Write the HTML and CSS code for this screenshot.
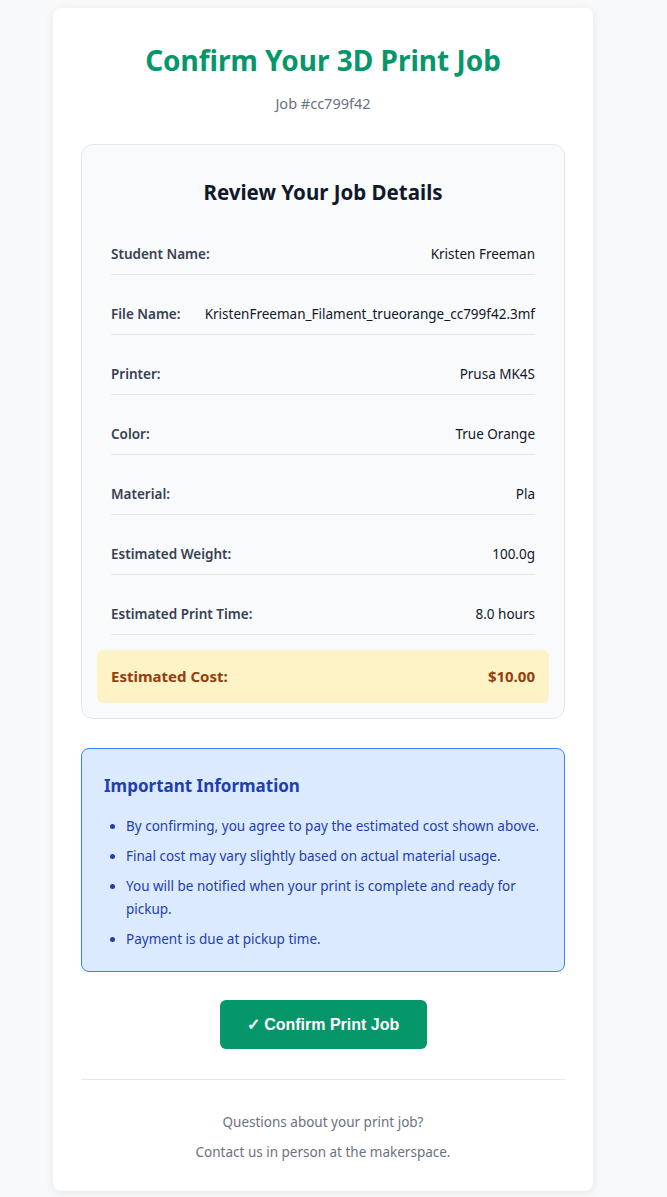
FILE: index.html
```html
<!DOCTYPE html>
<html lang="en">
<head>
<meta charset="utf-8">
<title>Confirm Your 3D Print Job</title>
<link rel="stylesheet" href="styles.css">
</head>
<body>
<div class="page">
  <main class="container">
    <header class="header">
      <h1 class="title">Confirm Your 3D Print Job</h1>
      <p class="job-id">Job #cc799f42</p>
    </header>

    <section class="details">
      <h2 class="details-title">Review Your Job Details</h2>
      <div class="row"><span class="label">Student Name:</span><span class="value">Kristen Freeman</span></div>
      <div class="row"><span class="label">File Name:</span><span class="value">KristenFreeman_Filament_trueorange_cc799f42.3mf</span></div>
      <div class="row"><span class="label">Printer:</span><span class="value">Prusa MK4S</span></div>
      <div class="row"><span class="label">Color:</span><span class="value">True Orange</span></div>
      <div class="row"><span class="label">Material:</span><span class="value">Pla</span></div>
      <div class="row"><span class="label">Estimated Weight:</span><span class="value">100.0g</span></div>
      <div class="row"><span class="label">Estimated Print Time:</span><span class="value">8.0 hours</span></div>
      <div class="row cost"><span class="label">Estimated Cost:</span><span class="value">$10.00</span></div>
    </section>

    <section class="info">
      <h3 class="info-title">Important Information</h3>
      <ul class="info-list">
        <li>By confirming, you agree to pay the estimated cost shown above.</li>
        <li>Final cost may vary slightly based on actual material usage.</li>
        <li>You will be notified when your print is complete and ready for pickup.</li>
        <li>Payment is due at pickup time.</li>
      </ul>
    </section>

    <div class="actions">
      <button class="confirm-btn" type="button">✓ Confirm Print Job</button>
    </div>

    <footer class="footer">
      <p>Questions about your print job?</p>
      <p>Contact us in person at the makerspace.</p>
    </footer>
  </main>
</div>
</body>
</html>
```

FILE: styles.css
```css
* { box-sizing: border-box; }

html, body {
  margin: 0;
  padding: 0;
  background: #f8f9fa;
}

body {
  font-family: "Noto Sans", "Open Sans", sans-serif;
  color: #1f2937;
}

.page {
  padding: 8px 0 7px 53px;
}

.container {
  width: 540px;
  background: #ffffff;
  border-radius: 8px;
  box-shadow: 0 2px 10px rgba(0, 0, 0, 0.08);
  padding: 31px 28px 29px;
}

.header {
  text-align: center;
  margin-bottom: 31px;
}

.title {
  margin: 0;
  font-size: 28px;
  line-height: 42px;
  font-weight: 700;
  color: #059669;
}

.job-id {
  margin: 12px 0 0;
  font-size: 14.5px;
  line-height: 20px;
  color: #6b7280;
}

.details {
  background: #f8fafc;
  border: 1px solid #e5e7eb;
  border-radius: 12px;
  padding: 33px 15px 15px;
}

.details-title {
  margin: 0 0 27px;
  text-align: center;
  font-size: 20.5px;
  line-height: 28px;
  font-weight: 700;
  color: #111827;
}

.row {
  display: flex;
  justify-content: space-between;
  align-items: center;
  gap: 16px;
  margin: 0 14px 18px;
  padding: 11px 0 10px;
  border-bottom: 1px solid #e5e7eb;
  font-size: 13.5px;
  line-height: 20px;
}

.label {
  font-weight: 600;
  color: #374151;
  white-space: nowrap;
}

.value {
  color: #111827;
  text-align: right;
  white-space: nowrap;
}

.row.cost {
  margin: 0;
  margin-top: -3px;
  padding: 16px 14px 17px;
  background: #fef3c7;
  border-bottom: none;
  border-radius: 6px;
  font-size: 15px;
}

.row.cost .label,
.row.cost .value {
  font-weight: 700;
  color: #92400e;
}

.info {
  margin-top: 29px;
  background: #dbeafe;
  border: 1px solid #3b82f6;
  border-radius: 8px;
  padding: 25px 22px 20px;
}

.info-title {
  margin: 0 0 17px;
  font-size: 17px;
  line-height: 24px;
  font-weight: 700;
  color: #1e40af;
}

.info-list {
  margin: 0;
  padding-left: 22px;
  color: #1e40af;
  font-size: 13.5px;
  line-height: 23px;
}

.info-list li {
  margin-bottom: 7px;
}

.info-list li:last-child {
  margin-bottom: 0;
}

.actions {
  display: flex;
  justify-content: center;
  padding: 28px 0 30px;
  border-bottom: 1px solid #e5e7eb;
}

.confirm-btn {
  width: 207px;
  height: 49px;
  border: none;
  border-radius: 6px;
  background: #059669;
  color: #ffffff;
  font-family: "Liberation Sans", Arial, sans-serif;
  font-size: 16px;
  font-weight: 700;
  cursor: pointer;
}

.footer {
  padding-top: 32px;
  text-align: center;
  color: #6b7280;
  font-size: 13.5px;
  line-height: 20px;
}

.footer p {
  margin: 0 0 10px;
}

.footer p:last-child {
  margin: 0;
}
```
